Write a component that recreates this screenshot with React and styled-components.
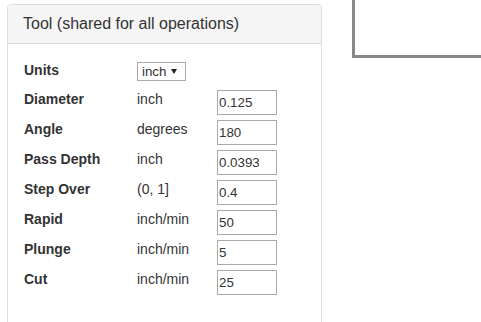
import React from "react";
import styled, { createGlobalStyle } from "styled-components";

const Global = createGlobalStyle`
  html, body { margin: 0; padding: 0; background: #fff; }
  body {
    font-family: "Liberation Sans", Arial, sans-serif;
    font-size: 14px;
    color: #333;
    overflow: hidden;
  }
`;

const Page = styled.div`
  display: flex;
  align-items: flex-start;
  padding-left: 7px;
  width: 481px;
  height: 322px;
  box-sizing: border-box;
  overflow: hidden;
`;

const Panel = styled.section`
  width: 315px;
  height: 340px;
  margin-top: 4px;
  box-sizing: border-box;
  border: 1px solid #ddd;
  border-radius: 4px;
  background: #fff;
  flex-shrink: 0;
`;

const PanelHeading = styled.div`
  padding: 10px 15px;
  background: #f5f5f5;
  border-bottom: 1px solid #ddd;
  border-radius: 3px 3px 0 0;
  font-size: 16px;
  line-height: 17.6px;
  color: #333;
`;

const PanelBody = styled.div`
  padding: 15px 15px 15px 16px;
`;

const Row = styled.div`
  display: grid;
  grid-template-columns: 113px 80px 60px;
  height: ${(p) => (p.$first ? 29 : 30)}px;
  align-items: start;
`;

const Label = styled.div`
  font-weight: bold;
  line-height: 20px;
  margin-top: 1px;
`;

const Unit = styled.div`
  line-height: 20px;
  margin-top: 1px;
`;

const SelectWrap = styled.div`
  position: relative;
  grid-column: 2 / 4;
  width: 49px;
  height: 19px;
  margin-top: 3px;
`;

const Select = styled.select`
  appearance: none;
  -webkit-appearance: none;
  width: 49px;
  height: 19px;
  box-sizing: border-box;
  border: 1px solid #a9a9a9;
  border-radius: 0;
  background: #fff;
  padding: 0 0 0 4px;
  font-family: "Liberation Sans", Arial, sans-serif;
  font-size: 13.333px;
  line-height: 17px;
  color: #333;
  outline: none;
`;

const Arrow = styled.span`
  position: absolute;
  left: 34px;
  top: 7px;
  width: 0;
  height: 0;
  border-left: 3px solid transparent;
  border-right: 3px solid transparent;
  border-top: 5px solid #222;
  pointer-events: none;
`;

const Input = styled.input`
  width: 60px;
  height: 25px;
  margin: 2px 0 0;
  box-sizing: border-box;
  border: 1px solid #a9a9a9;
  border-radius: 0;
  padding: 1px 17px 0 1px;
  font-family: "Liberation Sans", Arial, sans-serif;
  font-size: 13.333px;
  color: #333;
  background: #fff;
  outline: none;
`;

const Canvas = styled.div`
  margin-left: 30px;
  width: 200px;
  height: 58px;
  flex-shrink: 0;
  box-sizing: border-box;
  border: 3px solid #888;
  border-top: none;
  background: #fff;
`;

const fields = [
  ["Diameter", "inch", "0.125"],
  ["Angle", "degrees", "180"],
  ["Pass Depth", "inch", "0.03937007874015748"],
  ["Step Over", "(0, 1]", "0.4"],
  ["Rapid", "inch/min", "50"],
  ["Plunge", "inch/min", "5"],
  ["Cut", "inch/min", "25"],
];

export default function App() {
  return (
    <>
      <Global />
      <Page>
        <Panel>
          <PanelHeading>Tool (shared for all operations)</PanelHeading>
          <PanelBody>
            <Row $first>
              <Label>Units</Label>
              <SelectWrap>
                <Select defaultValue="inch">
                  <option value="inch">inch</option>
                  <option value="mm">mm</option>
                </Select>
                <Arrow />
              </SelectWrap>
            </Row>
            {fields.map(([label, unit, value]) => (
              <Row key={label}>
                <Label>{label}</Label>
                <Unit>{unit}</Unit>
                <Input defaultValue={value} />
              </Row>
            ))}
          </PanelBody>
        </Panel>
        <Canvas />
      </Page>
    </>
  );
}
